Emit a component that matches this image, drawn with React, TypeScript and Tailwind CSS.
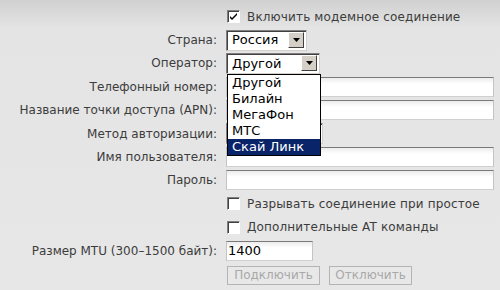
import React from "react";

const font = { fontFamily: '"DejaVu Sans", Verdana, sans-serif' };

function Label({ children }: { children?: React.ReactNode }) {
  return (
    <div className="flex items-center justify-end pr-[9px] text-[12px] text-[#3c3c3c] whitespace-nowrap">
      {children}
    </div>
  );
}

function Row({ label, children }: { label?: string; children?: React.ReactNode }) {
  return (
    <div className="grid grid-cols-[226px_1fr] h-[23.4px]">
      <Label>{label}</Label>
      <div className="flex items-center relative">{children}</div>
    </div>
  );
}

function Checkbox({ checked }: { checked?: boolean }) {
  return (
    <span className="inline-flex items-center justify-center w-[13px] h-[13px] border border-t-[#808080] border-l-[#808080] border-r-white border-b-white bg-white shadow-[inset_1px_1px_0_#404040]">
      {checked && (
        <svg width="9" height="9" viewBox="0 0 9 9">
          <path d="M1 4 L3 6 L8 1 L8 3 L3 8 L1 6 Z" fill="#000" />
        </svg>
      )}
    </span>
  );
}

function CheckRow({ text, checked }: { text: string; checked?: boolean }) {
  return (
    <Row>
      <div className="flex items-center pl-[1px] gap-[7px] text-[12px] text-[#3c3c3c] tracking-[0.15px]">
        <Checkbox checked={checked} />
        <span>{text}</span>
      </div>
    </Row>
  );
}

function Select({ value, width }: { value: string; width: number }) {
  return (
    <div
      className="flex items-center h-[21px] bg-white border border-t-[#808080] border-l-[#808080] border-r-[#d4d0c8] border-b-[#d4d0c8] shadow-[inset_1px_1px_0_#404040] pl-[5px] pr-[2px] text-[13px] text-black"
      style={{ width }}
    >
      <span className="flex-1">{value}</span>
      <span className="flex items-center justify-center w-[16px] h-[16px] bg-[#d4d0c8] border border-t-white border-l-white border-r-[#404040] border-b-[#404040]">
        <svg width="7" height="4" viewBox="0 0 7 4">
          <path d="M0 0 H7 L3.5 4 Z" fill="#000" />
        </svg>
      </span>
    </div>
  );
}

function Input({ value, width }: { value?: string; width?: number }) {
  return (
    <div
      className="flex items-center h-[20px] border border-t-[#7a7a7a] border-l-[#c4c4c4] border-r-[#c4c4c4] border-b-[#d0d0d0] bg-[linear-gradient(to_bottom,#ececec,#ffffff_6px)] px-[1px] text-[13px] text-black"
      style={{ width: width ?? 268 }}
    >
      {value}
    </div>
  );
}

function Button({ children, width }: { children: string; width: number }) {
  return (
    <div
      className="flex items-center justify-center h-[19px] border border-[#b4b4b4] text-[12px] text-[#a8a8a8] bg-[#e8e8e8]"
      style={{ width }}
    >
      {children}
    </div>
  );
}

export default function App() {
  const items = ["Другой", "Билайн", "МегаФон", "МТС", "Скай Линк"];
  return (
    <div
      className="w-[500px] h-[290px] overflow-hidden bg-[linear-gradient(to_bottom,#d0d0d0,#e4e4e4_28px,#e7e7e7)] pt-[5px]"
      style={font}
    >
      <CheckRow text="Включить модемное соединение" checked />
      <Row label="Страна:">
        <Select value="Россия" width={81} />
      </Row>
      <Row label="Оператор:">
        <Select value="Другой" width={94} />
        <div className="absolute left-[1px] top-[22px] z-10 w-[94px] border border-black bg-white text-[13px] text-black">
          {items.map((it, i) => (
            <div
              key={it}
              className={
                "h-[16px] leading-[16px] pl-[4px] " +
                (i === items.length - 1 ? "bg-[#0a246a] text-white" : "")
              }
            >
              {it}
            </div>
          ))}
        </div>
      </Row>
      <Row label="Телефонный номер:">
        <Input />
      </Row>
      <Row label="Название точки доступа (APN):">
        <Input />
      </Row>
      <Row label="Метод авторизации:">
        <Select value="" width={97} />
      </Row>
      <Row label="Имя пользователя:">
        <Input />
      </Row>
      <Row label="Пароль:">
        <Input />
      </Row>
      <CheckRow text="Разрывать соединение при простое" />
      <CheckRow text="Дополнительные AT команды" />
      <Row label="Размер MTU (300–1500 байт):">
        <Input value="1400" width={87} />
      </Row>
      <Row>
        <div className="flex items-center gap-[9px] pl-[1px] pt-[3px]">
          <Button width={93}>Подключить</Button>
          <Button width={83}>Отключить</Button>
        </div>
      </Row>
    </div>
  );
}
